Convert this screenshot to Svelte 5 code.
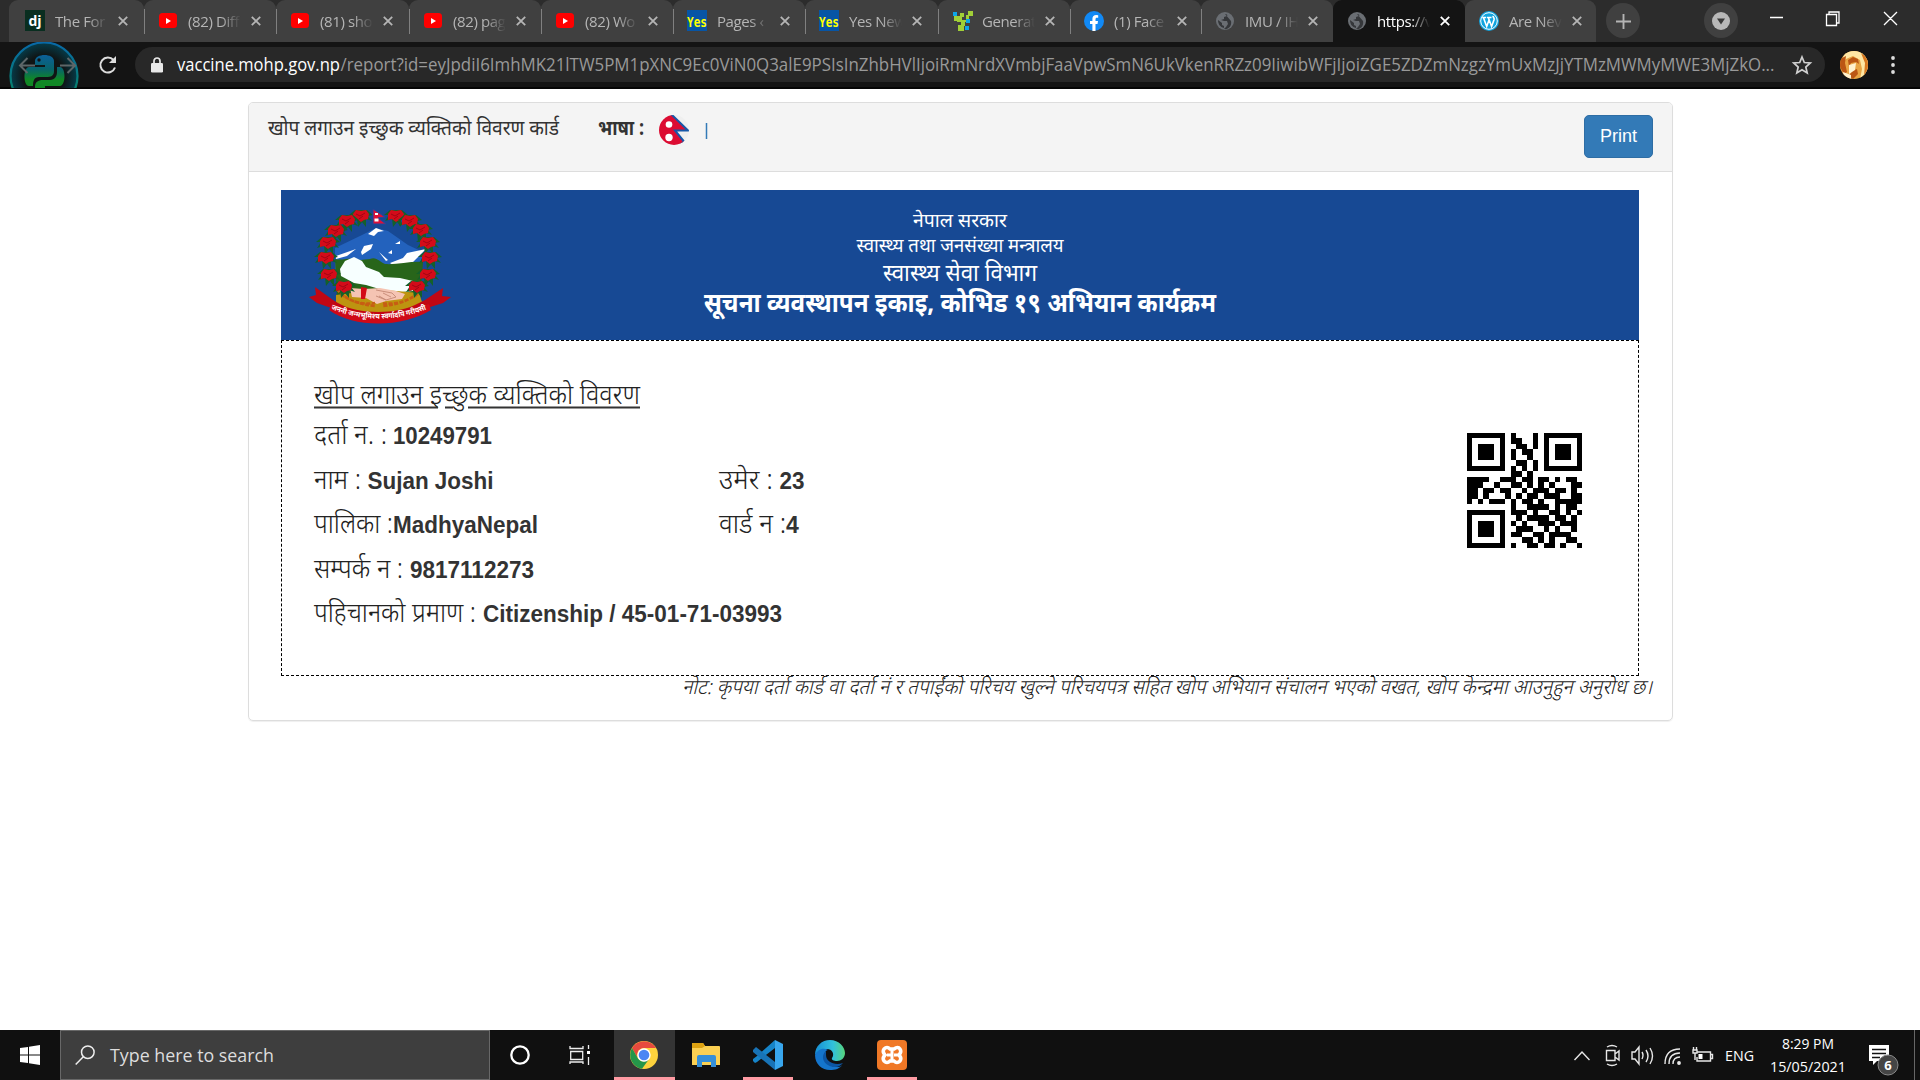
<script>
  const tabs = [
    { icon: 'dj', text: 'The For', w: 135 },
    { icon: 'yt', text: '(82) Diff', w: 132 },
    { icon: 'yt', text: '(81) sho', w: 133 },
    { icon: 'yt', text: '(82) pag', w: 132 },
    { icon: 'yt', text: '(82) Wo', w: 132 },
    { icon: 'yes', text: 'Pages ‹', w: 132 },
    { icon: 'yes', text: 'Yes New', w: 133 },
    { icon: 'gen', text: 'Generat', w: 132 },
    { icon: 'fb', text: '(1) Face', w: 131 },
    { icon: 'globe', text: 'IMU / IH', w: 132 },
    { icon: 'globe', text: 'https://v', w: 132, active: true },
    { icon: 'wp', text: 'Are Nev', w: 131 }
  ];

  const qr = [
    '111111101000101111111',
    '100000101100101000001',
    '101110100110101011101',
    '101110101011001011101',
    '101110101001001011101',
    '100000100110101000001',
    '111111101010101111111',
    '000000001101000000000',
    '111100111011011010110',
    '111001001101010100011',
    '110110110010111011010',
    '110100010101101110011',
    '101011101011010011111',
    '000000001001111010110',
    '111111101110100110101',
    '100000100101111011010',
    '101110101010011101110',
    '101110100111001010010',
    '101110101100110111100',
    '100000100011010100110',
    '111111101001101101001'
  ];
  let cells = '';
  qr.forEach((row, y) => {
    [...row].forEach((v, x) => {
      if (v === '1') cells += `M${x} ${y}h1v1h-1z`;
    });
  });

  const flowers = [
    [61, 15], [47, 20], [36, 30], [28, 42], [26, 57], [29, 74], [44, 86],
    [96, 15], [110, 20], [121, 29], [128, 42], [130, 57], [128, 74], [117, 86]
  ];
</script>

<div class="screen">
  <div class="tabbar">
    {#each tabs as t, i}
      <div class="tab" class:active={t.active} class:line={i > 0 && i < 10} style:width="{t.w}px">
        <svg class="fav" viewBox="0 0 20 20">
          {#if t.icon === 'dj'}
            <rect y="-1" width="20" height="21" fill="#092e20" />
            <text x="10" y="14.5" text-anchor="middle" class="djt">dj</text>
          {:else if t.icon === 'yt'}
            <rect x="1" y="2" width="18" height="15" rx="3.5" fill="#f00" />
            <path d="M8 7v6l5-3z" fill="#fff" />
          {:else if t.icon === 'yes'}
            <rect y="-1" width="20" height="21" fill="#0755a5" />
            <text x="10" y="16" text-anchor="middle" textLength="20" lengthAdjust="spacingAndGlyphs" class="yest">Yes</text>
          {:else if t.icon === 'gen'}
            <path d="M5 5h5v4h4V4h2V0h5v5h-4v6h-4v4h-1v5H6v-6h3v-3H5z" fill="#a1cf37" />
            <path d="M1 1h4v4H1zM14 8h4v4h-4zM13 15h4v4h-4z" fill="#0ca5e9" />
            <path d="M2 5h4v5H2zM8 2h4v4H8z" fill="#a1cf37" />
          {:else if t.icon === 'fb'}
            <circle cx="10" cy="10" r="10" fill="#1189f5" />
            <path d="M8.4 20v-7H6v-3h2.4V8c0-2.6 1.5-4 3.8-4l2 .2v2.5h-1.2c-1.2 0-1.5.7-1.5 1.5V10H14l-.5 3h-2v7z" fill="#fff" />
          {:else if t.icon === 'globe'}
            <circle cx="10" cy="10" r="9" fill="#6a6e73" />
            <path d="M10 3c2 0 3 1 2 2L9 6v2l-3 1 3 1h3l1 3-2 3-2 2c5 1 8-4 7-8M3 9l4 3v2l2 1v2C5 16 3 13 3 9" fill="#35373a" />
          {:else}
            <circle cx="10" cy="10" r="10" fill="#12a4df" />
            <circle cx="10" cy="10" r="8.300" fill="none" stroke="#fff" stroke-width="1" />
            <path d="M3.200 6.500h4M8 6.500h4.500M4.400 6.500 7.700 15.500l2.300-6.500M9.300 6.500l3.300 9 2.500-7c.4-2-1.300-2-1-3.700" fill="none" stroke="#fff" stroke-width="1.600" />
          {/if}
        </svg>
        <span class="tt">{t.text}</span>
        <svg class="x" viewBox="0 0 10 10"><path d="M.8.8l8.400 8.400M9.200.8.8 9.200" /></svg>
      </div>
    {/each}
    <div class="round plus"><svg viewBox="0 0 16 16"><path d="M8 0v16M0 8h16" stroke="#b4b4b4" stroke-width="2" /></svg></div>
    <div class="round drop"><svg viewBox="0 0 18 18"><circle cx="9" cy="9" r="9" fill="#b8b8b8" /><path d="M5 6.500h8L9 12.500z" fill="#3a3a3a" /></svg></div>
    <svg class="win" viewBox="0 0 150 37" fill="none" stroke="#fff" stroke-width="1.3">
      <path d="M6 17.500h13M62.500 14.500h10v11h-10zM65 14.500v-2.500h10v11h-2.500M120 12l13 13M133 12l-13 13" />
    </svg>
  </div>

  <div class="toolbar">
    <svg class="nav" viewBox="0 0 80 46">
      <defs>
        <linearGradient id="ring" x2="0" y2="1"><stop stop-color="#0869a8" /><stop offset="1" stop-color="#078a52" /></linearGradient>
        <linearGradient id="py" x1="0" y1="12" x2="0" y2="46" gradientUnits="userSpaceOnUse"><stop stop-color="#0c5f9c" /><stop offset=".45" stop-color="#08646a" /><stop offset=".75" stop-color="#108825" /></linearGradient>
        <radialGradient id="glow"><stop offset=".6" stop-color="#101414" /><stop offset="1" stop-color="#053c4a" /></radialGradient>
      </defs>
      <circle cx="44" cy="34" r="33.500" fill="url(#glow)" stroke="url(#ring)" stroke-width="2.200" />
      <path d="M35 19c0-8 19-8 19 0v10c0 5-3 6-8 6h-7c-5 0-6 4-6 9h-4c-6 0-6-19 0-19h16v-2H35z" fill="url(#py)" />
      <path d="M57 25h3c6 0 6 18 0 19H45v2h10v8H35v-9c0-5 3-7 8-7h7c5 0 7-4 7-8z" fill="url(#py)" />
      <circle cx="39" cy="18" r="1.700" fill="#111" />
      <path d="M35 32.500h-15M27.500 25l-7.500 7.500 7.500 7.500M60 32.500h15M67.500 25l7.500 7.500-7.500 7.500" transform="translate(0 -9)" fill="none" stroke="#5d6668" stroke-width="2" />
    </svg>
    <svg class="reload" viewBox="0 0 20 20"><path d="M17 12.500a7.500 7.500 0 1 1-1.500-7.500" fill="none" stroke="#ddd" stroke-width="2" /><path d="M18 1v7h-7z" fill="#ddd" /></svg>
    <div class="omni">
      <svg class="lock" viewBox="0 0 12 16"><rect y="6" width="12" height="9.500" rx="1.300" fill="#e8e8e8" /><path d="M3 7V4a3 3 0 0 1 6 0v3" fill="none" stroke="#e8e8e8" stroke-width="1.700" /></svg>
      <svg class="url" viewBox="0 0 1600 36">
        <text x="0" y="24" textLength="163" lengthAdjust="spacingAndGlyphs" fill="#fff">vaccine.mohp.gov.np</text>
        <text x="163.500" y="24" textLength="1434" lengthAdjust="spacingAndGlyphs" fill="#999">/report?id=eyJpdiI6ImhMK21lTW5PM1pXNC9Ec0ViN0Q3alE9PSIsInZhbHVlIjoiRmNrdXVmbjFaaVpwSmN6UkVkenRRZz09IiwibWFjIjoiZGE5ZDZmNzgzYmUxMzJjYTMzMWMyMWE3MjZkO...</text>
      </svg>
      <svg class="star" viewBox="0 0 20 20"><path d="M10 2l2.300 5.500 6 .5-4.500 4 1.400 6L10 14.800 4.800 18l1.400-6L1.700 8l6-.5z" fill="none" stroke="#d0d0d0" stroke-width="1.700" /></svg>
    </div>
    <svg class="avatar" viewBox="0 0 28 28">
      <clipPath id="av"><circle cx="14" cy="14" r="14" /></clipPath>
      <g clip-path="url(#av)">
        <rect width="28" height="28" fill="#e9a544" />
        <path d="M5 0h18l5 10v14l-8 4 2-10-2-9-7-4-7 3-5 5z" fill="#ffe7a5" />
        <path d="M0 8l6-3-1 7 2 9-3 2-4-7zM8 9l5-3 5 2 1 5-3-2-5 1-2 4zM12 20l5-2 1 5-5 5-4-3z" fill="#bb5614" />
        <path d="M9 14l7-2-1 7-6 4zM3 21l8 3v4H4z" fill="#fff2cf" />
        <path d="M21 2l7 5v14l-4 4 1-13z" fill="#d9781f" />
      </g>
    </svg>
    <svg class="dots" viewBox="0 0 4 18" fill="#ddd"><circle cx="2" cy="2" r="1.900" /><circle cx="2" cy="9" r="1.900" /><circle cx="2" cy="16" r="1.900" /></svg>
  </div>

  <main>
    <section class="card">
      <header>
        <svg class="headtxt" viewBox="0 0 480 40">
          <text x="0" y="20" textLength="291" lengthAdjust="spacingAndGlyphs">खोप लगाउन इच्छुक व्यक्तिको विवरण कार्ड</text>
          <text x="330" y="20" textLength="46" lengthAdjust="spacingAndGlyphs" class="b">भाषा :</text>
          <clipPath id="fc"><circle cx="406" cy="15" r="15" /></clipPath>
          <g clip-path="url(#fc)">
            <rect x="390" y="0" width="32" height="32" fill="#efefef" />
            <path d="M388-2h14l18 17.500h-13l9 11-8 8h-20z" fill="#dc0c32" stroke="#1758a8" stroke-width="2" />
            <circle cx="401" cy="9.500" r="3.300" fill="#fff" /><circle cx="401" cy="22.500" r="3.700" fill="#fff" />
          </g>
          <path d="M438.500 8v16" stroke="#337ab7" stroke-width="1.500" />
        </svg>
        <button>Print</button>
      </header>
      <div class="body">
        <div class="banner">
          <svg class="emblem" viewBox="0 0 160 120">
            <ellipse cx="79" cy="61" rx="46" ry="43" fill="#174994" />
            <path d="M35 48 62 35l14-7 12 3 20 14 15 7-4 21-84 1z" fill="#2362bd" />
            <path d="M68 34l8-6 8 3-6 1-4 4-3-1zM61 52l3-6 9-2-2 5-9 6zM79 52l9 8-2 1zM88 53l4-3v4zM95 44l5-3v3zM36 56l20-7-9 7-11 3zM90 63l13-5 4-5 19-4-14 14-18 3z" fill="#fff" />
            <path d="M35 59c10 2 14-3 25 1l10-1c6-3 10 3 15 5 11 1 26-3 38-2l-3 38H37z" fill="#28651a" />
            <path d="M40 69l5-8 9-4 8 4 4 6 13 5 5 5 16 1 13 3v10l-11 1-16-1-20-6-12-2-13-7z" fill="#f7ffff" />
            <path d="M36 95l24-3 25-2 34 3 4 12c-22 12-65 12-87 0z" fill="#bd9410" />
            <path d="M50 88l14 1 16-1 16 3 9 3-3 5-16 2-9 3-11-6-14-1z" fill="#f5c4b3" />
            <path d="M61 87l6 1-2 11h-4z" fill="#d30b16" />
            <path d="M76 90l16 3 4 4-10 3-10-4M83 93l8 4M79 96l7 4" fill="none" stroke="#c98e7b" />
            <g stroke="#c75d13" stroke-width="2.500" fill="none" stroke-dasharray="4 1.500">
              <path d="M37 89q10 14 38 17M121 89q-10 14-38 17M41 94q15 12 34 9M118 94q-18 12-36 9" />
            </g>
            {#each flowers as [x, y]}
              <g transform="translate({x} {y})">
                <path d="M-11 6l4-6-5 0 6-5 12 0 6 5-5 1 4 5-6-2 0 8-4-5-4 5-1-8z" fill="#14602a" />
                <path d="M-8-1l3-4 5 1 5-1 3 4-1 5-4 1-3 2-4-3-4 1z" fill="#d40b19" />
                <path d="M-5-1l4 2 5-3M-2 4l4-3" fill="none" stroke="#a10513" />
              </g>
            {/each}
            <path d="M73 9l12 8-7 1 8 6H73z" fill="#dd1039" stroke="#25479a" />
            <path d="M75 13h3v2h-3zM74.500 18.500h4v3h-4z" fill="#fff" />
            <path d="M9 97l7-2-1-8 18 13 5 3c20 12 60 12 81 0l6-3 18-12-1 8 9 1-8 6-19 6c-28 18-68 18-90 0l-17-6z" fill="#c10714" />
            <path d="M32 104q48 20 97 0l2 6c-27 17-76 19-102 0z" fill="#cf0917" />
            <path id="rib" d="M31 109q48 20 99-1" fill="none" />
            <text class="ribbon" fill="#fff"><textPath href="#rib" textLength="98" lengthAdjust="spacingAndGlyphs">जननी जन्मभूमिश्च स्वर्गादपि गरीयसी</textPath></text>
          </svg>
          <svg class="titles" viewBox="0 0 560 150" text-anchor="middle" fill="#fff">
            <text x="280" y="36.500" font-size="19.500" textLength="94" lengthAdjust="spacingAndGlyphs">नेपाल सरकार</text>
            <text x="280" y="61.500" font-size="19.500" textLength="207" lengthAdjust="spacingAndGlyphs">स्वास्थ्य तथा जनसंख्या मन्त्रालय</text>
            <text x="280" y="91" font-size="23.500" textLength="154" lengthAdjust="spacingAndGlyphs">स्वास्थ्य सेवा विभाग</text>
            <text x="280" y="121.500" font-size="27" font-weight="700" textLength="512" lengthAdjust="spacingAndGlyphs">सूचना व्यवस्थापन इकाइ, कोभिड १९ अभियान कार्यक्रम</text>
          </svg>
        </div>
        <div class="details">
          <svg class="info" viewBox="0 0 560 290">
            <text x="0" y="43" textLength="326" lengthAdjust="spacingAndGlyphs">खोप लगाउन इच्छुक व्यक्तिको विवरण</text>
            <path d="M0 46.500h124M131 46.500h8M154 46.500h172" stroke="#333" stroke-width="2" />
            <text x="0" y="83" textLength="73" lengthAdjust="spacingAndGlyphs">दर्ता न. :</text><text x="79" y="83" textLength="99" lengthAdjust="spacingAndGlyphs" class="v">10249791</text>
            <text x="0" y="128" textLength="47" lengthAdjust="spacingAndGlyphs">नाम :</text><text x="53.500" y="128" textLength="126" lengthAdjust="spacingAndGlyphs" class="v">Sujan Joshi</text>
            <text x="405" y="128" textLength="54" lengthAdjust="spacingAndGlyphs">उमेर :</text><text x="465.500" y="128" textLength="25" lengthAdjust="spacingAndGlyphs" class="v">23</text>
            <text x="0" y="172" textLength="79" lengthAdjust="spacingAndGlyphs">पालिका :</text><text x="79" y="172" textLength="145" lengthAdjust="spacingAndGlyphs" class="v">MadhyaNepal</text>
            <text x="405" y="172" textLength="67" lengthAdjust="spacingAndGlyphs">वार्ड न :</text><text x="472" y="172" class="v">4</text>
            <text x="0" y="217" textLength="89" lengthAdjust="spacingAndGlyphs">सम्पर्क न :</text><text x="96" y="217" textLength="124" lengthAdjust="spacingAndGlyphs" class="v">9817112273</text>
            <text x="0" y="261" textLength="162" lengthAdjust="spacingAndGlyphs">पहिचानको प्रमाण :</text><text x="169" y="261" textLength="299" lengthAdjust="spacingAndGlyphs" class="v">Citizenship / 45-01-71-03993</text>
          </svg>
          <svg class="qr" viewBox="0 0 21 21" shape-rendering="crispEdges"><path d={cells} /></svg>
        </div>
        <svg class="note" viewBox="0 0 974 44">
          <text transform="translate(1 18) skewX(-14)" textLength="970" lengthAdjust="spacingAndGlyphs">नोट: कृपया दर्ता कार्ड वा दर्ता नं र तपाईंको परिचय खुल्ने परिचयपत्र सहित खोप अभियान संचालन भएको वखत, खोप केन्द्रमा आउनुहुन अनुरोध छ।</text>
        </svg>
      </div>
    </section>
  </main>

  <footer>
    <div class="start"><svg viewBox="0 0 20 20" fill="#fff"><path d="M0 3l8-1.100v7.600H0zM9 1.700 20 0v9.500H9zM0 10.500h8v7.600L0 17zM9 10.500h11V20L9 18.300z" /></svg></div>
    <div class="search">
      <svg viewBox="0 0 20 20" fill="none" stroke="#eee" stroke-width="1.500"><circle cx="12.800" cy="7.200" r="6.300" /><path d="M8.300 11.700.700 19.500" /></svg>
      <svg class="stext" viewBox="0 0 180 36"><text x="0" y="25" textLength="164" lengthAdjust="spacingAndGlyphs">Type here to search</text></svg>
    </div>
    <div class="app wide"><svg class="s20" viewBox="0 0 20 20"><circle cx="10" cy="10" r="8.700" fill="none" stroke="#fff" stroke-width="2.300" /></svg></div>
    <div class="app task"><svg class="s20" viewBox="0 0 20 20" fill="none" stroke="#eee" stroke-width="1.300"><path d="M0 1v2.500h13V1M.700 6.500h12v8h-12zM0 19v-2h13v2M18.500 0v4M18.500 12v8" /><path d="M17 6h3v3h-3z" fill="#fff" stroke="none" /></svg></div>
    <div class="app on"><svg class="s28" viewBox="0 0 28 28">
      <circle cx="14" cy="14" r="14" fill="#fdd23d" /><path d="M2 7a14 14 0 0 1 24.100 0H14a7 7 0 0 0-6 10.500z" fill="#e64a3e" />
      <path d="M2 7a14 14 0 0 0 10 20.800l7.500-10.300a7 7 0 0 1-11.500 0z" fill="#25964a" /><circle cx="14" cy="14" r="6.700" fill="#fff" /><circle cx="14" cy="14" r="5.300" fill="#4b86f3" />
    </svg></div>
    <div class="app"><svg class="s28" viewBox="0 0 28 28"><path d="M0 3q0-1 1-1h10l2 3h14q1 0 1 1v18H0z" fill="#fbd052" /><path d="M0 3q0-1 1-1h10l2 3-3 2H0z" fill="#dda211" /><path d="M5 26V16q0-2 2-2h15q2 0 2 2v10h-5v-5H10v5z" fill="#358fd8" /></svg></div>
    <div class="app"><svg class="s30" viewBox="0 0 30 30"><path d="M22 0 4 16 0 19v2l2 2 2-1L22 8z" fill="#1684c9" /><path d="M0 10l3-3 19 15v8L0 12z" fill="#1873b6" /><path d="M22 0l8 4v22l-8 4z" fill="#38a6ed" /></svg><i></i></div>
    <div class="app"><svg class="s30" viewBox="0 0 30 30">
      <defs><linearGradient id="eg"><stop stop-color="#168ed5" /><stop offset=".6" stop-color="#31c1dc" /><stop offset="1" stop-color="#57d57b" /></linearGradient></defs>
      <path d="M0 15C0 6 7 0 15 0c9 0 15 7 15 13 0 5-4 8-8 8-3 0-6-1-5-3 3-4 0-9-5-9C7 9 2 12 0 15z" fill="url(#eg)" />
      <path d="M0 15c2-5 8-8 13-5-6 1-6 17 10 17 2 0 4-1 5-3-3 5-8 6-13 6C7 30 0 24 0 15z" fill="#1475cc" /><path d="M11 11c-7 6-1 16 9 16 4 0 6-2 8-4-8 3-17-1-17-8z" fill="#0c56a4" />
    </svg></div>
    <div class="app"><svg class="s30" viewBox="0 0 30 30">
      <rect width="30" height="30" rx="4" fill="#f07826" />
      <path d="M7 9q3-3 6 0l4 0q4-3 6 0 2 3-1 6 3 3 1 6-3 3-6 0l-4 0q-3 3-6 0-2-3 1-6-3-3-1-6z" fill="#f07826" stroke="#fff" stroke-width="3.500" />
      <path d="M10 15h4M15 10v10M17 15h4" stroke="#fff" stroke-width="3" />
    </svg><i></i></div>
    <svg class="tray" viewBox="0 0 370 50" fill="none" stroke="#e7e7e7" stroke-width="1.400">
      <path d="M24.500 30l7.500-8 7.500 8" />
      <path d="M56.500 20.500h8.500v10h-8.500zM65 24l4-3v9l-4-3M57 17q5-3 10 0M57 34q5 3 10 0" />
      <path d="M82 22h3l4-5v17l-4-5h-3zM92 22q2 3 0 7M96 20q4 6 0 12M100 18q5 8 0 16" />
      <path d="M115 34q0-15 15-15M119 34q0-11 11-11M123 34q0-7 7-7" /><circle cx="129" cy="33" r="1.200" fill="#fff" />
      <path d="M147 22h13.500v9h-13.500v-4M160.500 24.500h2v4h-2M143 20h4v3h-4zM143.500 20v-3M146.500 20v-3M145 23v7" /><path d="M148.500 24h4v5h-4z" fill="#fff" stroke="none" />
      <g fill="#fff" stroke="none">
        <text x="175" y="31" textLength="29" lengthAdjust="spacingAndGlyphs">ENG</text>
        <text x="232" y="18.500" textLength="52" lengthAdjust="spacingAndGlyphs">8:29 PM</text>
        <text x="220" y="41.500" textLength="76" lengthAdjust="spacingAndGlyphs">15/05/2021</text>
        <path d="M319 15h20v16h-12l-4 4v-4h-4z" />
      </g>
      <path d="M322 19.500h14M322 23.500h14M322 27.500h8" stroke="#111" />
      <circle cx="338" cy="35" r="10" fill="#454545" stroke="#888" stroke-width="1" /><text x="338" y="40" text-anchor="middle" class="badge">6</text>
      <path d="M364.500 0v50" stroke="#666" stroke-width="1" />
    </svg>
  </footer>
</div>

<style>
  :global(body) { margin: 0; overflow: hidden; background: #fff; }
  .screen { width: 1920px; height: 1080px; display: flex; flex-direction: column; overflow: hidden; font-family: 'Open Sans', 'Noto Sans', sans-serif; }
  svg { display: block; flex: none; overflow: visible; }
  .tabbar { height: 42px; background: #2c2c2c; display: flex; padding-left: 9px; box-sizing: border-box; flex: none; }
  .tab { height: 42px; box-sizing: border-box; background: #404040; border-radius: 9px 9px 0 0; display: flex; align-items: center; padding-left: 14px; flex: none; color: #b5b5b5; }
  .tab:first-child { padding-left: 16px; }
  .tab.line { background: linear-gradient(#808080, #808080) 0 9px / 1px 25px no-repeat #404040; }
  .tab.active { background: #141414; color: #fff; }
  .fav { width: 20px; height: 20px; }
  .djt { font: bold 14px 'Open Sans', sans-serif; fill: #fff; }
  .yest { font: bold 14px 'DejaVu Sans Mono', monospace; fill: #ff0; }
  .tt { font-size: 15px; letter-spacing: -.4px; width: 53px; white-space: nowrap; margin-left: 10px; line-height: 22px; mask-image: linear-gradient(90deg, #000 62%, transparent); }
  .x { width: 10px; height: 10px; margin-left: 10px; stroke: currentColor; stroke-width: 1.8; }
  .round { width: 34px; height: 34px; border-radius: 50%; background: #404040; display: flex; align-items: center; justify-content: center; margin-top: 3px; padding-top: 1px; box-sizing: border-box; height: 35px; flex: none; }
  .plus { margin-left: 10px; }
  .plus svg { width: 15px; }
  .drop { margin-left: 64px; }
  .drop svg { width: 18px; }
  .win { width: 150px; height: 37px; margin-left: 26px; }
  .toolbar { height: 47px; background: #141414; border-bottom: 2px solid #050505; box-sizing: border-box; display: flex; align-items: center; flex: none; }
  .nav { width: 80px; height: 46px; overflow: hidden; }
  .reload { width: 20px; height: 20px; margin-left: 18px; }
  .omni { width: 1690px; height: 35px; margin-left: 17px; border-radius: 18px; background: #282828; display: flex; align-items: center; flex: none; }
  .lock { width: 12px; height: 16px; margin-left: 16px; }
  .url { width: 1600px; height: 36px; margin-left: 14px; font-size: 17.5px; }
  .star { width: 20px; height: 20px; margin-left: 15px; }
  .avatar { width: 28px; height: 28px; margin-left: 15px; }
  .dots { width: 4px; height: 18px; margin-left: 23px; }

  main { flex: 1; padding: 13px 247px 0 248px; font-family: 'Noto Sans', sans-serif; color: #333; }
  .card { height: 619px; box-sizing: border-box; border: 1px solid #ddd; border-radius: 5px; box-shadow: 0 1px 1px #0001; }
  header { height: 69px; box-sizing: border-box; background: #f4f4f4; border-bottom: 1px solid #ddd; display: flex; justify-content: space-between; padding: 12px 19px 0; border-radius: 4px 4px 0 0; }
  .headtxt { width: 480px; height: 40px; font-size: 21px; fill: #333; }
  .headtxt .b { font-weight: 700; }
  button { width: 69px; height: 43px; border: 1px solid #2e6da4; background: #337ab7; border-radius: 5px; color: #fff; font: 18px 'Liberation Sans', Arial, sans-serif; padding: 0; }
  .body { padding: 18px 17px 0 32px; display: flex; flex-direction: column; }
  .banner { width: 1358px; height: 150px; background: #174994; display: grid; grid-template-columns: 399px 560px; }
  .emblem { width: 160px; height: 120px; margin: 10px 0 0 19px; }
  .ribbon { font-size: 7.5px; font-weight: 700; }
  .titles { width: 560px; height: 150px; }
  .details { width: 1358px; height: 336px; box-sizing: border-box; border: 1px dashed #000; display: flex; justify-content: space-between; padding-left: 32px; }
  .info { width: 560px; height: 290px; margin-top: 20px; font-size: 27px; font-weight: 300; fill: #222; }
  .info .v { font: bold 23px 'Liberation Sans', Arial, sans-serif; fill: #333; }
  .qr { width: 115px; height: 115px; margin: 92px 56px 0 0; }
  .note { width: 974px; height: 44px; align-self: flex-end; font-size: 20.5px; font-weight: 300; fill: #222; }

  footer { height: 50px; background: #101010; display: flex; flex: none; }
  .start { width: 60px; display: flex; align-items: center; justify-content: center; }
  .start svg { width: 20px; }
  .search { width: 430px; box-sizing: border-box; border: 1px solid #686868; background: #3e3e3e; display: flex; align-items: center; padding-left: 14px; gap: 15px; }
  .search > svg { width: 20px; height: 20px; }
  .search .stext { width: 180px; height: 36px; font-size: 18.5px; fill: #ddd; }
  .app { width: 61.8px; display: flex; align-items: center; justify-content: center; position: relative; }
  .app.wide { width: 60px; }
  .app.task { width: 63.600px; padding-right: 3px; box-sizing: border-box; }
  .app.on { background: #343434; border-bottom: 3px solid #ff9ba3; border-top: 3px solid #343434; box-sizing: border-box; }
  .app i { position: absolute; left: 6px; right: 6px; bottom: 0; height: 3px; background: #ff9ba3; }
  .s20 { width: 20px; height: 20px; }
  .s28 { width: 28px; height: 28px; }
  .s30 { width: 30px; height: 30px; }
  .tray { width: 370px; height: 50px; margin-left: auto; font-size: 14.5px; }
  .badge { font-size: 13px; font-weight: 700; fill: #fff; stroke: none; }
</style>
